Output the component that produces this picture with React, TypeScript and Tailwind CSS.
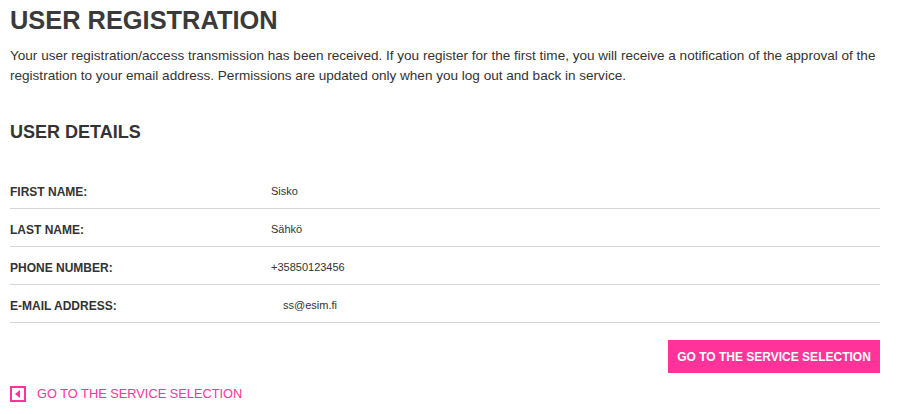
import React from "react";

type Row = { label: string; value: string; indent?: boolean };

const rows: Row[] = [
  { label: "FIRST NAME:", value: "Sisko" },
  { label: "LAST NAME:", value: "Sähkö" },
  { label: "PHONE NUMBER:", value: "+35850123456" },
  { label: "E-MAIL ADDRESS:", value: "ss@esim.fi", indent: true },
];

export default function App() {
  return (
    <div
      className="w-[900px] h-[414px] bg-white text-[#333333] px-[10px] overflow-hidden"
      style={{ fontFamily: '"Liberation Sans", Arial, sans-serif' }}
    >
      <div className="w-[870px]">
        <h1 className="pt-[5px] text-[25.4px] leading-[30px] font-bold text-[#3a3a3a]">USER REGISTRATION</h1>
        <p className="mt-[11px] text-[13.55px] leading-[20px]">
          Your user registration/access transmission has been received. If you register for the first time, you will receive a notification of the approval of the registration to your email address. Permissions are updated only when you log out and back in service.
        </p>

        <h2 className="mt-[36px] text-[18px] leading-[20px] font-bold text-[#333333]">USER DETAILS</h2>

        {/* details table */}
        <div className="mt-[29px]">
          {rows.map((r) => (
            <div key={r.label} className="flex items-center h-[38px] pt-[4px] border-b border-[#d6d6d6]">
              <div className="w-[261px] text-[12px] font-bold">{r.label}</div>
              <div className={r.indent ? "pl-[12px] text-[11px]" : "text-[11px]"}>{r.value}</div>
            </div>
          ))}
        </div>

        <div className="flex justify-end mt-[17px]">
          <button className="w-[212px] h-[33px] bg-[#ff3399] text-white text-[12px] font-bold">
            GO TO THE SERVICE SELECTION
          </button>
        </div>

        <a href="#" className="mt-[13px] flex items-center gap-[11px] text-[#ff3399] text-[12.8px] leading-[16px]">
          <span className="w-[16px] h-[16px] border-2 border-[#ff3399] flex items-center justify-center">
            <svg width="6" height="8" viewBox="0 0 6 8">
              <path d="M5 0 L0 4 L5 8 Z" fill="#ff3399" />
            </svg>
          </span>
          GO TO THE SERVICE SELECTION
        </a>
      </div>
    </div>
  );
}
